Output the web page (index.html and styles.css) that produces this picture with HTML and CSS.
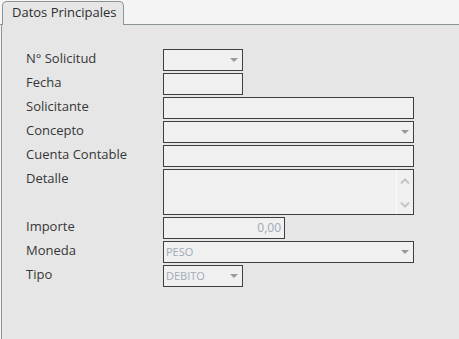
FILE: index.html
```html
<!DOCTYPE html>
<html lang="es">
<head>
    <meta charset="UTF-8">
    <title>Datos Principales</title>
    <link rel="stylesheet" href="styles.css">
</head>
<body>
    <div class="tabs">
        <div class="tab">Datos Principales</div>
    </div>
    <div class="panel">
        <div class="form">
            <div class="label">N° Solicitud</div>
            <div class="field short combo"><span class="arrow"></span></div>

            <div class="label">Fecha</div>
            <div class="field short"></div>

            <div class="label">Solicitante</div>
            <div class="field wide"></div>

            <div class="label">Concepto</div>
            <div class="field wide combo"><span class="arrow"></span></div>

            <div class="label">Cuenta Contable</div>
            <div class="field wide"></div>

            <div class="label top">Detalle</div>
            <div class="field wide area">
                <div class="scroll">
                    <svg width="10" height="6" viewBox="0 0 10 6"><path d="M1 5.5 L5 1.5 L9 5.5" fill="none" stroke="#c4c4c4" stroke-width="2"/></svg>
                    <svg width="10" height="6" viewBox="0 0 10 6"><path d="M1 0.5 L5 4.5 L9 0.5" fill="none" stroke="#c4c4c4" stroke-width="2"/></svg>
                </div>
            </div>

            <div class="label">Importe</div>
            <div class="field mid disabled number">0,00</div>

            <div class="label">Moneda</div>
            <div class="field wide combo disabled">PESO<span class="arrow"></span></div>

            <div class="label">Tipo</div>
            <div class="field short combo disabled">DEBITO<span class="arrow"></span></div>
        </div>
    </div>
</body>
</html>
```

FILE: styles.css
```css
* {
    margin: 0;
    padding: 0;
    box-sizing: border-box;
}

html, body {
    height: 100%;
}

body {
    background-color: #f4f4f4;
    color: #363636;
    font-family: 'Open Sans', 'Noto Sans', sans-serif;
    font-size: 13px;
    display: flex;
    flex-direction: column;
    overflow: hidden;
}

/* pestañas */
.tabs {
    height: 25px;
    padding: 1px 0 0 2px;
    border-bottom: 1px solid #8a9499;
    display: flex;
}

.tab {
    width: 122px;
    height: 24px;
    padding-left: 9px;
    line-height: 21px;
    background-color: #e6e6e6;
    border: 1px solid #8a9499;
    border-bottom: none;
    border-radius: 5px 5px 0 0;
    margin-bottom: -1px;
    color: #2e2e2e;
}

.panel {
    flex: 1;
    margin-left: 1px;
    background-color: #e6e6e6;
    border-left: 1px solid #8a9499;
    padding: 24px 0 0 24px;
}

.form {
    display: grid;
    grid-template-columns: 137px auto;
    row-gap: 2px;
    align-items: center;
    justify-items: start;
}

.label {
    line-height: 20px;
    margin-top: -4px;
}

.label.top {
    align-self: start;
    margin-top: -1px;
}

.field {
    height: 22px;
    background-color: #f0f0f0;
    border: 1px solid #3f3f3f;
    position: relative;
    font-size: 11px;
    line-height: 20px;
    padding-left: 2px;
}

.short { width: 80px; }
.mid { width: 122px; }
.wide { width: 251px; }

.area {
    height: 46px;
}

.scroll {
    position: absolute;
    top: 0;
    right: 0;
    bottom: 0;
    width: 17px;
    border-left: 1px solid #fafafa;
    display: flex;
    flex-direction: column;
    justify-content: space-between;
    align-items: center;
    padding: 8px 0 6px;
}

.scroll svg {
    display: block;
}

.arrow {
    position: absolute;
    right: 4px;
    top: 8px;
    width: 0;
    height: 0;
    border-left: 4px solid transparent;
    border-right: 4px solid transparent;
    border-top: 4px solid #9a9a9a;
}

.disabled {
    color: #9eabb8;
}

.number {
    text-align: right;
    padding-right: 3px;
    font-size: 12px;
}
```
